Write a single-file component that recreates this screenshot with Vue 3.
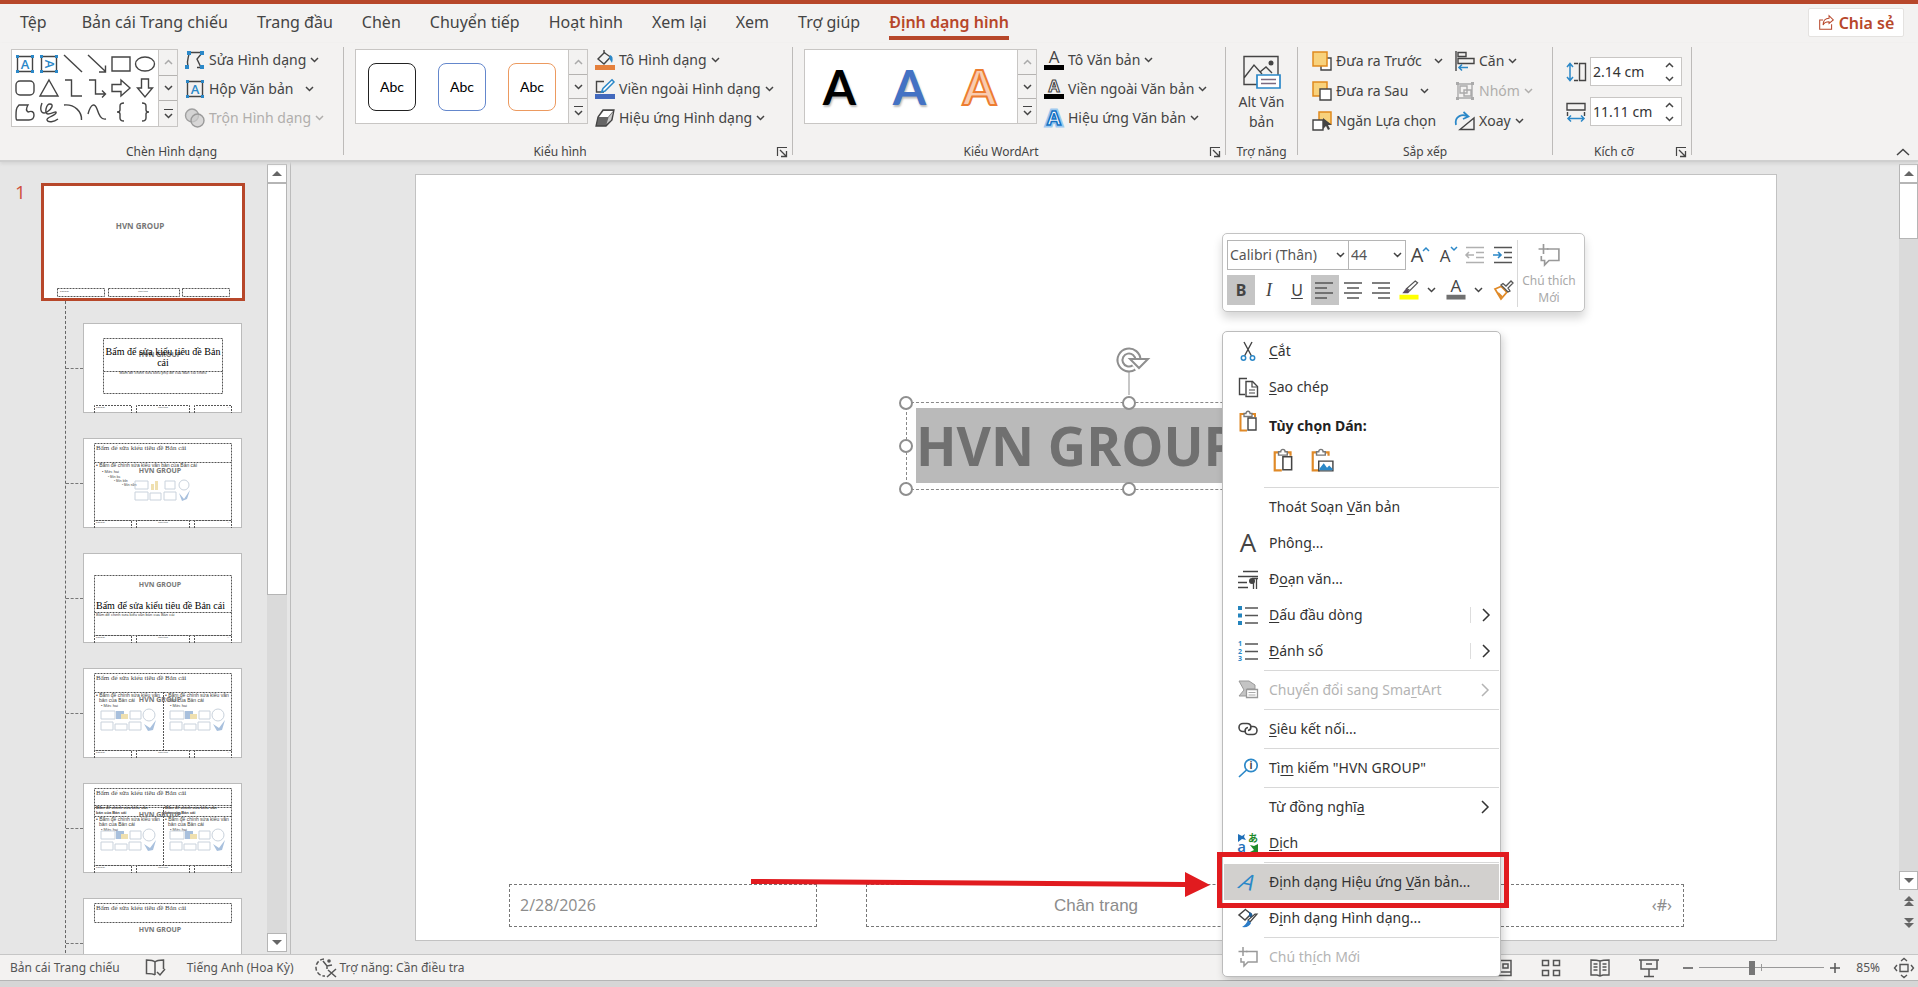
<script setup>
import { h, ref } from 'vue'

const ink = '#444'
const blue = '#2b88c8'
const line = (d, c = ink, w = 1.4) => `<path d="${d}" fill="none" stroke="${c}" stroke-width="${w}"/>`
const fill = (d, c) => `<path d="${d}" fill="${c}"/>`
const glyph = (t, x, y, s, c, extra = '') =>
  `<text x="${x}" y="${y}" font-size="${s}" fill="${c}" font-family="Open Sans, sans-serif" text-anchor="middle" ${extra}>${t}</text>`
const corners = (c = blue) =>
  [[1, 1], [16, 1], [1, 16], [16, 16]].map(([x, y]) => `<rect x="${x}" y="${y}" width="3" height="3" fill="${c}"/>`).join('')
const clip = (x = 0, y = 0) =>
  `<g transform="translate(${x} ${y})">` +
  line('M6 4H2.5V20.5H9M13 4h4V7', '#e08a28', 2) +
  '<path d="M6 6.500V3.500h2c0-3 4-3 4 0h2v3z" fill="#fff" stroke="#777" stroke-width="1.300"/>'

const icons = {
  textbox: line('M2.500 2.500h15v15h-15z') + corners() + glyph('A', 10, 14.500, 13, blue, 'font-weight="600"'),
  textboxV: line('M2.500 2.500h15v15h-15z') + corners() + glyph('A', 10, 14.500, 13, blue, 'font-weight="600" transform="rotate(90 10 10)"'),
  line: line('M1 1L19 18'),
  arrow: line('M1 1L18 17M18.500 11.500V18H12'),
  rect: line('M1 3h18v14h-18z'),
  oval: '<ellipse cx="10" cy="10" rx="9.500" ry="7" fill="none" stroke="#444" stroke-width="1.400"/>',
  round: '<rect x="1" y="3" width="18" height="14" rx="4" fill="none" stroke="#444" stroke-width="1.400"/>',
  tri: line('M10 2L19 18H1z'),
  elbow: line('M2 2H8.500V18H19'),
  elbowArrow: line('M2 2H8.500V16H18M15 12.500L18.500 16L15 19.500'),
  right: line('M1 6.500H10V2L19 10L10 18V13.500H1z'),
  down: line('M6.500 1V10H2.500L10 19L17.500 10H13.500V1z'),
  free: line('M4 3H13Q10 8 13 10Q19 8 19 13Q19 18 14 18H2Q1 18 1 14C1 9 1 6 4 3z'),
  scribble: line('M3 1C0 9 3 13 8 10S15 2 11 2S5 12 9 12S18 8 17 11S7 15 8 18S15 20 19 17'),
  arc: line('M1 3C12 2 19 10 18.500 18'),
  wave: line('M1 12C4 1 8 1 10 7S14 18 19 17'),
  lbrace: line('M13 1Q9 1 9 4V8Q9 10 6 10Q9 10 9 12V16Q9 19 13 19'),
  rbrace: line('M7 1Q11 1 11 4V8Q11 10 14 10Q11 10 11 12V16Q11 19 7 19'),
  editShape: line('M4 2.500H16M4 3C4 8 1 9 3 17.500M17 3L12 9L16 17.500H12', ink, 1.400) + '<g fill="#2b88c8"><path d="M2 1h4v4H2zM15 1h4v4h-4zM0 15h4v4H0zM15 15h4v4h-4z"/></g>',
  merge: '<circle cx="7" cy="7.500" r="6.500" fill="#d4d4d4" stroke="#a0a0a0" stroke-width="1.400"/><circle cx="12.500" cy="12.500" r="6.500" fill="#cccccc" fill-opacity=".7" stroke="#999" stroke-width="1.400"/>',
  fill: line('M10 2L3 9L9 14L15.500 7L9 2.500V0') + fill('M15 5q4 1 2 8q-2-3-3-5z', blue) + fill('M0 15h20v5H0z', '#e5803c'),
  outline: line('M9 2.500H1.500V13H9') + `<path d="M17 0.800L19 3L10 12L6.500 13L8 9.500z" fill="#fff" stroke="${blue}" stroke-width="1.500"/>` + fill('M0 15h20v5H0z', '#4269bd'),
  effect: '<path d="M8 2h11l-2 10l-6 6H1L3 9z" fill="#666" stroke="#444" stroke-width="1.300"/>' + fill('M8.500 3h9.500l-5 6H4z', '#fff') + fill('M13.500 9.500L18 4L16 12L11.500 16z', '#ccc'),
  textFill: glyph('A', 10, 13, 17, ink) + fill('M0 15h20v5H0z', '#000'),
  textOutline: glyph('A', 10, 13, 16, '#fff', 'class="hollow" stroke="#444" stroke-width="1.100" font-weight="700"') + fill('M0 15h20v5H0z', '#000'),
  textEffect: glyph('A', 10, 17, 20, '#fff', 'stroke="#9cc9ef" stroke-width="5" font-weight="700"') + glyph('A', 10, 17, 20, '#fff', 'stroke="#1673c4" stroke-width="1.600" font-weight="700"'),
  front: '<path d="M9 7h10v12H9z" fill="#fff" stroke="#444" stroke-width="1.400"/><path d="M1 1h14v14H1z" fill="#f8d27c" stroke="#e08a1e" stroke-width="1.500"/>',
  back: '<path d="M1 1h14v14H1z" fill="#f8d27c" stroke="#e08a1e" stroke-width="1.500"/><path d="M8 8h11v11H8z" fill="#fff" stroke="#444" stroke-width="1.400"/>',
  select: '<path d="M7 1h12v12H7z" fill="#f8d27c" stroke="#e08a1e" stroke-width="1.500"/><path d="M1 9h10v10H1z" fill="#fff" stroke="#444" stroke-width="1.400"/><path d="M11 7v11l3-3l2 4l2-1l-2-4h4z" fill="#444"/>',
  align: line('M1 0V20') + line('M3 1.500h8v4H3zM3 7.500h16v5H3z') + line('M13 16.500H4M7 13.500L4 16.500L7 19.500', blue, 1.600),
  group: line('M3 3h14v14H3zM5 5h7v7H5zM9 9h7v6H9z', '#aaa') + corners('#aaa'),
  rotate: line('M5 18.500H19V7z') + line('M1 14C-1 5 8 2 13 6M8.500 1L13.500 5.500L8 8', blue, 1.700),
  alt: line('M15 29.500H2V1.500H36V20M2 23L12 10L20 19M18 17L24 12L30 18') + '<circle cx="29" cy="8" r="2.500" fill="#444"/><path d="M15 20h23v13H15z" fill="#fff" stroke="#2b88c8" stroke-width="1.700"/>' + line('M19 24.500H34M19 28.500H34', '#7b6a80'),
  height: line('M4 2V18M1 5L4 1.500L7 5M1 15L4 18.500L7 15', blue, 1.500) + line('M8 1.500h4M8 18.500h4M13.500 1.500h6v17h-6z'),
  width: line('M1 1.500H19V8H1zM1.500 10V14M18.500 10V14') + line('M2 16.500H18M5 13.500L2 16.500L5 19.500M15 13.500L18 16.500L15 19.500', blue, 1.500),
  share: line('M6 7H2V18H16V12', '#b7472a', 1.200) + line('M6 13C6 7 9 5 13 5V2L18 7L13 11V9C9 9 7 10 6 13z', '#b7472a', 1.200),
  launch: line('M1.500 10V1.500H11', ink, 1.200) + line('M4 4L10 10M10.500 5V10.500H5', ink, 1.300),
  cut: line('M6 1L13.500 15M14 1L6.500 15') + `<g fill="none" stroke="${blue}" stroke-width="1.500"><circle cx="5.500" cy="17" r="2.200"/><circle cx="14.500" cy="17" r="2.200"/></g>`,
  copy: line('M7 17.500H1.500V1.500H9') + '<path d="M8 4.500h6.500l5 5v10H8z" fill="#fff" stroke="#444" stroke-width="1.400"/>' + line('M14 4.500V10H19.500M11 13h6M11 16h6', ink, 1.200),
  paste: clip() + '<path d="M10 8h8v12h-8z" fill="#fff" stroke="#444" stroke-width="1.400"/></g>',
  pasteImg: clip() + '<path d="M8 12h13v9H8z" fill="#fff" stroke="#444" stroke-width="1.300"/><path d="M8.600 19l4-5l3 4l2-2l3 3v1.400h-12z" fill="#2b88c8"/></g>',
  font: glyph('A', 10, 19, 26, ink),
  para: line('M5 2.500H20M0 7.500H20M0 13.500H9M0 18.500H10', ink, 1.300) + line('M15.500 9V20M18.500 9V20M14 9.500H20', ink, 1.300) + '<circle cx="14" cy="12" r="3" fill="#444"/>',
  bullets: line('M7 3H20M7 10.500H20M7 18H20', '#555', 1.500) + '<path d="M0 1h4v4H0zM0 8.500h4v4H0zM0 16h4v4H0z" fill="#2484bd"/>',
  numbers: line('M7 3H20M7 10.500H20M7 18H20', '#555', 1.500) + [1, 2, 3].map((n, i) => glyph(n, 2, 5 + i * 7.500, 7, blue, 'font-weight="700"')).join(''),
  smart: '<path d="M1 1h10l6 4v4H9v7H1l5-6z" fill="#c4c4c4" stroke="#999"/><path d="M8.500 9.500h11v8h-11z" fill="#fff" stroke="#999" stroke-width="1.300"/>' + line('M10.500 12.500h7M10.500 15h7', '#aaa', 1),
  link: line('M8 12.500H5A4 4 0 0 1 5 4.500H9C14 4.500 14 11 10 11.500', ink, 1.600) + line('M12 7.500H15A4 4 0 0 1 15 15.500H11C6 15.500 6 9 10 8.500', ink, 1.600),
  search: `<circle cx="13" cy="7.500" r="6.200" fill="#fff" stroke="${blue}" stroke-width="1.700"/>` + line('M8.500 12L1 19', blue, 1.700) + glyph('i', 13, 11, 10, ink, 'font-weight="700"'),
  translate: glyph('a', 3.500, 19, 15, '#1f6fb8', 'font-weight="600"') + '<text x="15" y="9" font-size="10" font-weight="700" font-family="Noto Sans CJK JP, sans-serif" text-anchor="middle" fill="#1d8a2a">あ</text>' + fill('M0 1l4 2l3-2l-1 3l2 3l-4-1l-4 3z', '#1f6fb8') + fill('M12 12l4 1l4-2v8h-8l4-2z', '#1d8a2a'),
  wordArt: glyph('A', 10, 18, 22, blue, 'transform="rotate(12 10 10) skewX(-20) translate(4 0)"'),
  shapeFmt: line('M8 1L1 7L7 12L13 6L8 2', ink, 1.500) + fill('M11 4q5 1 3 7l-3-3z', '#1f5f9a') + '<path d="M19 6L12 14L10 12L17 6z" fill="#fff" stroke="#444" stroke-width="1.200"/>' + fill('M10 12l3 3q-2 5-9 4q4-2 6-7z', '#2b7cc8'),
  comment: line('M8 4.500H19V15H10L6 19V15H3V11', '#999', 1.500) + line('M5 0V9M0.500 4.500H9.500', '#999', 1.500),
  grow: glyph('A', 8, 17, 20, ink) + line('M14 6L17 3L20 6', blue, 1.500),
  shrink: glyph('A', 8, 17, 17, ink) + line('M14 2L17 5L20 2', blue, 1.500),
  outdent: line('M1 2.500H19M11 7.500H19M11 12.500H19M1 17.500H19', '#b0b0b0', 1.500) + line('M9 10H1M4 7L1 10L4 13', '#b0b0b0', 1.500),
  indent: line('M1 2.500H19M11 7.500H19M11 12.500H19M1 17.500H19', '#555', 1.600) + line('M0 10H8M5 7L8 10L5 13', blue, 1.600),
  left: line('M0 3H18M0 8H12M0 13H18M0 18H12', '#555', 1.500),
  center: line('M1 3H19M4 8H16M1 13H19M4 18H16', '#555', 1.500),
  rightA: line('M1 3H19M7 8H19M1 13H19M7 18H19', '#555', 1.500),
  marker: '<path d="M16.500 1L19 3L11 11L7.500 9z" fill="#fff" stroke="#555" stroke-width="1.300"/>' + fill('M7 9l4 3l-2 2H3z', '#5c4a60') + fill('M0 15.500h20v5H0z', '#ff0'),
  fontColor: glyph('A', 10, 13, 18, ink) + fill('M0 15.500h20v5H0z', '#707070'),
  brush: '<path d="M2 9L9 6L14 12L8 19z" fill="#fff" stroke="#e08a28" stroke-width="1.800"/>' + line('M5 13L9 17M8 6L14 12', '#e08a28', 2) + '<path d="M8 5L10 3.500L13 6L18 1L20 3L15 8L17 11L15 12z" fill="#fff" stroke="#555" stroke-width="1.300"/>',
  book: line('M10 4V17M10 4C8 2 4 2 1.500 2V15.500C4 15.500 8 15.500 10 17M10 4C12 2 16 2 18.500 2V11M12 14L15 17L20 11', '#555', 1.500),
  access: line('M8 1A8.500 8.500 0 0 0 9 18', '#555', 1.500).replace('/>', ' stroke-dasharray="4 2"/>') + line('M7 3L11 8L16 7M11 8V11M12 12L20 19M20 11L11 19', '#555', 1.500) + '<circle cx="13" cy="3" r="1.800" fill="#555"/>',
  normal: line('M1 2.500H19V17.500H1zM1 14H19M7 2V14M11 6H16V10H11z', '#555', 1.500),
  sorter: line('M1.500 2.500h6v5h-6zM12.500 2.500h6v5h-6zM1.500 12.500h6v5h-6zM12.500 12.500h6v5h-6z', '#555', 1.500),
  reading: line('M10 3V18M10 3C7 2 4 2 1 2V17H7L10 18L13 17H19V2C16 2 13 2 10 3M3.500 6h4M3.500 9h4M3.500 12h4M12.500 6h4M12.500 9h4M12.500 12h4', '#555', 1.400),
  show: line('M0 2H20M2 2V11H18V2M10 11V18M5 18.500H15M7 6H13', '#555', 1.500),
  fit: line('M6 6.500H14V13.500H6zM7 3L10 0.500L13 3M7 17L10 19.500L13 17M3 7L0.500 10L3 13M17 7L19.500 10L17 13', '#555', 1.400)
}

const Icon = (p) =>
  h('svg', { width: p.w || 20, height: p.h || p.w || 20, viewBox: p.box || '0 0 20 20', 'aria-hidden': 'true', overflow: 'visible', innerHTML: icons[p.name] })
Icon.props = ['name', 'w', 'h', 'box']

const Chevron = (p) =>
  h('svg', { width: p.big ? 10 : 9, height: p.big ? 16 : 6, viewBox: p.big ? '0 0 10 16' : '0 0 9 6', 'aria-hidden': 'true' },
    [h('path', { d: p.big ? 'M2 2L8 8L2 14' : p.up ? 'M1 5L4.500 1.500L8 5' : 'M1 1L4.500 4.500L8 1', fill: 'none', stroke: 'currentColor', 'stroke-width': 1.5 })])
Chevron.props = { big: Boolean, up: Boolean }

const tabs = ['Tệp', 'Bản cái Trang chiếu', 'Trang đầu', 'Chèn', 'Chuyển tiếp', 'Hoạt hình', 'Xem lại', 'Xem', 'Trợ giúp', 'Định dạng hình']
const shapes = ['textbox', 'textboxV', 'line', 'arrow', 'rect', 'oval', 'round', 'tri', 'elbow', 'elbowArrow', 'right', 'down', 'free', 'scribble', 'arc', 'wave', 'lbrace', 'rbrace']
const insertCmds = [
  { icon: 'editShape', label: 'Sửa Hình dạng' },
  { icon: 'textbox', label: 'Hộp Văn bản', wide: true },
  { icon: 'merge', label: 'Trộn Hình dạng', off: true }
]
const shapeCmds = [
  { icon: 'fill', label: 'Tô Hình dạng' },
  { icon: 'outline', label: 'Viền ngoài Hình dạng' },
  { icon: 'effect', label: 'Hiệu ứng Hình dạng' }
]
const artCmds = [
  { icon: 'textFill', label: 'Tô Văn bản' },
  { icon: 'textOutline', label: 'Viền ngoài Văn bản' },
  { icon: 'textEffect', label: 'Hiệu ứng Văn bản' }
]
const orderCmds = [
  { icon: 'front', label: 'Đưa ra Trước', wide: true },
  { icon: 'back', label: 'Đưa ra Sau', wide: true },
  { icon: 'select', label: 'Ngăn Lựa chọn', plain: true }
]
const alignCmds = [
  { icon: 'align', label: 'Căn' },
  { icon: 'group', label: 'Nhóm', off: true },
  { icon: 'rotate', label: 'Xoay' }
]

const menu = [
  { icon: 'cut', t: ['', 'C', 'ắt'] },
  { icon: 'copy', t: ['', 'S', 'ao chép'] },
  { paste: true },
  { sep: true },
  { t: ['Thoát Soạn ', 'V', 'ăn bản'] },
  { icon: 'font', t: ['Phôn', 'g', '...'] },
  { icon: 'para', t: ['Đ', 'o', 'ạn văn...'] },
  { icon: 'bullets', t: ['', 'D', 'ấu đầu dòng'], more: true, split: true },
  { icon: 'numbers', t: ['', 'Đ', 'ánh số'], more: true, split: true },
  { sep: true },
  { icon: 'smart', t: ['Chuyển đổi sang Sma', 'r', 'tArt'], more: true, off: true },
  { sep: true },
  { icon: 'link', t: ['', 'S', 'iêu kết nối...'] },
  { sep: true },
  { icon: 'search', t: ['Tì', 'm', ' kiếm "HVN GROUP"'] },
  { sep: true },
  { t: ['Từ đồng nghĩ', 'a', ''], more: true },
  { icon: 'translate', t: ['', 'D', 'ịch'] },
  { sep: true },
  { icon: 'wordArt', t: ['Định dạng Hiệu ứng ', 'V', 'ăn bản...'], active: true },
  { icon: 'shapeFmt', t: ['Đ', 'ị', 'nh dạng Hình dạng...'] },
  { sep: true },
  { icon: 'comment', t: ['Chú th', 'í', 'ch Mới'], off: true }
]

const layouts = ['title', 'content', 'section', 'two', 'compare', 'only']
const heading = 'Bấm để sửa kiểu tiêu đề Bản cái'
const height = ref('2.14 cm')
const width = ref('11.11 cm')
const zoom = ref(42)
</script>

<template>
  <div class="app">
    <header class="top">
      <nav class="tabs">
        <button v-for="(t, i) in tabs" :key="t" class="tab" :class="{ on: i === 9, file: i === 0 }">{{ t }}</button>
      </nav>
      <button class="share"><Icon name="share" :w="17" />Chia sẻ</button>
    </header>

    <section class="ribbon">
      <div class="group g-insert">
        <div class="body">
          <div class="gallery">
            <div class="shapes">
              <button v-for="s in shapes" :key="s" :aria-label="s"><Icon :name="s" /></button>
            </div>
            <div class="scroller">
              <button aria-label="Lên" class="dim"><Chevron up /></button>
              <button aria-label="Xuống"><Chevron /></button>
              <button aria-label="Thêm" class="more"><Chevron /></button>
            </div>
          </div>
          <div class="cmds">
            <button v-for="c in insertCmds" :key="c.label" class="cmd" :class="{ wide: c.wide, off: c.off }"><Icon :name="c.icon" /><span>{{ c.label }}</span><Chevron /></button>
          </div>
        </div>
        <div class="foot"><span>Chèn Hình dạng</span></div>
      </div>
      <i class="rule"></i>
      <div class="group g-shape">
        <div class="body">
          <div class="gallery short">
            <div class="cards">
              <button class="abc black">Abc</button>
              <button class="abc navy">Abc</button>
              <button class="abc orange">Abc</button>
            </div>
            <div class="scroller">
              <button aria-label="Lên" class="dim"><Chevron up /></button>
              <button aria-label="Xuống"><Chevron /></button>
              <button aria-label="Thêm" class="more"><Chevron /></button>
            </div>
          </div>
          <div class="cmds">
            <button v-for="c in shapeCmds" :key="c.label" class="cmd"><Icon :name="c.icon" /><span>{{ c.label }}</span><Chevron /></button>
          </div>
        </div>
        <div class="foot"><span>Kiểu hình</span><button aria-label="Kiểu hình"><Icon name="launch" :w="12" box="0 0 12 12" /></button></div>
      </div>
      <i class="rule"></i>
      <div class="group g-art">
        <div class="body">
          <div class="gallery short">
            <div class="cards">
              <button class="art a1">A</button>
              <button class="art a2">A</button>
              <button class="art a3">A</button>
            </div>
            <div class="scroller">
              <button aria-label="Lên" class="dim"><Chevron up /></button>
              <button aria-label="Xuống"><Chevron /></button>
              <button aria-label="Thêm" class="more"><Chevron /></button>
            </div>
          </div>
          <div class="cmds">
            <button v-for="c in artCmds" :key="c.label" class="cmd"><Icon :name="c.icon" /><span>{{ c.label }}</span><Chevron /></button>
          </div>
        </div>
        <div class="foot"><span>Kiểu WordArt</span><button aria-label="Kiểu WordArt"><Icon name="launch" :w="12" box="0 0 12 12" /></button></div>
      </div>
      <i class="rule"></i>
      <div class="group g-alt">
        <button class="alt"><Icon name="alt" :w="39" :h="34" box="0 0 39 34" /><span>Alt Văn<br>bản</span></button>
        <div class="foot"><span>Trợ năng</span></div>
      </div>
      <i class="rule"></i>
      <div class="group g-order">
        <div class="body">
          <div class="cmds tall first">
            <button v-for="c in orderCmds" :key="c.label" class="cmd" :class="{ wide: c.wide }"><Icon :name="c.icon" /><span>{{ c.label }}</span><Chevron v-if="!c.plain" /></button>
          </div>
          <div class="cmds tall">
            <button v-for="c in alignCmds" :key="c.label" class="cmd" :class="{ off: c.off }"><Icon :name="c.icon" /><span>{{ c.label }}</span><Chevron /></button>
          </div>
        </div>
        <div class="foot"><span>Sắp xếp</span></div>
      </div>
      <i class="rule"></i>
      <div class="group g-size">
        <div class="sizes">
          <label class="size"><Icon name="height" /><span class="field"><input v-model="height" aria-label="Chiều cao"><span class="spin"><button aria-label="Tăng chiều cao"><Chevron up /></button><button aria-label="Giảm chiều cao"><Chevron /></button></span></span></label>
          <label class="size"><Icon name="width" /><span class="field"><input v-model="width" aria-label="Chiều rộng"><span class="spin"><button aria-label="Tăng chiều rộng"><Chevron up /></button><button aria-label="Giảm chiều rộng"><Chevron /></button></span></span></label>
        </div>
        <div class="foot"><span>Kích cỡ</span><button aria-label="Kích cỡ"><Icon name="launch" :w="12" box="0 0 12 12" /></button></div>
      </div>
      <i class="rule"></i>
      <button class="collapse" aria-label="Thu gọn"><svg width="14" height="8" viewBox="0 0 14 8"><path d="M1 7L7 1.500L13 7" fill="none" stroke="#444" stroke-width="1.500" /></svg></button>
    </section>

    <main class="work">
      <aside class="panel">
        <div class="list">
          <div class="master">
            <span class="num">1</span>
            <svg class="big" width="204" height="118" viewBox="0 0 204 118">
              <rect x="1.500" y="1.500" width="201" height="115" fill="#fff" stroke="#b7472a" stroke-width="3" />
              <text x="99" y="46" class="brand" font-size="8">HVN GROUP</text>
              <g class="ph"><path d="M16.500 105.500h47v8h-47zM67.500 105.500h71v8h-71zM141.500 105.500h47v8h-47z" /></g>
              <text x="19" y="109" font-size="2">2/28/2026</text><text x="97" y="109" font-size="2">Chân trang</text>
            </svg>
          </div>
          <ul class="tree">
            <li v-for="k in layouts" :key="k">
              <i></i>
              <svg class="thumb" width="159" height="90" viewBox="0 0 159 90">
                <rect x="0.500" y="0.500" width="158" height="89" fill="#fff" stroke="#bbb" />
                <template v-if="k !== 'only'">
                  <path class="dash" d="M11.500 90V82.500h37V90M53.500 90V82.500h53V90M111.500 90V82.500h37V90" />
                  <text x="13" y="85" font-size="2">2/28/2026</text><text x="75" y="85" font-size="2">Chân trang</text><text x="144" y="85" font-size="2">‹#›</text>
                </template>
                <template v-if="k === 'title'">
                  <path class="dash" d="M20.500 15.500h119v55h-119zM20.500 48.500h119" />
                  <text x="77" y="34" class="brand" font-size="7">HVN GROUP</text>
                  <text x="80" y="32" class="serif mid" font-size="10">Bấm để sửa kiểu tiêu đề Bản</text>
                  <text x="80" y="43" class="serif mid" font-size="10">cái</text>
                  <text x="80" y="51" class="mid" font-size="4">Bấm để chỉnh sửa kiểu phụ đề của Bản cái chiếu</text>
                </template>
                <template v-else-if="k === 'section'">
                  <path class="dash" d="M11.500 22.500h137v60h-137zM11.500 59.500h137" />
                  <text x="77" y="34" class="brand" font-size="7">HVN GROUP</text>
                  <text x="13" y="56" class="serif" font-size="10">{{ heading }}</text>
                  <text x="13" y="63" font-size="4" fill="#888">Bấm để chỉnh sửa kiểu văn bản của Bản cái</text>
                </template>
                <template v-else>
                  <path class="dash" d="M11.500 5.500h137v19h-137z" />
                  <text x="13" y="12" class="serif soft" font-size="7">{{ heading }}</text>
                </template>
                <template v-if="k === 'content'">
                  <path class="dash" d="M11.500 24.500V82.500H148.500V24.500" />
                  <text x="13" y="29" font-size="5">• Bấm để chỉnh sửa kiểu văn bản của Bản cái</text>
                  <text x="19" y="35" font-size="4">• Mức hai</text><text x="25" y="40" font-size="3">• Mức ba</text><text x="31" y="44" font-size="3">• Mức bốn</text><text x="39" y="48" font-size="3">• Mức năm</text>
                  <text x="77" y="35" class="brand" font-size="7">HVN GROUP</text>
                  <g class="media" transform="translate(52 43)"><path d="M0 0h13v8H0zM30 0h10v8H30zM0 11h13v8H0zM29 11h12v8H29zM15 12h11v7H15z" /><path d="M16 3h3v6h-3zM20 0h3v9h-3z" class="gold" /><circle cx="49" cy="4" r="5" /><path d="M44 12l5 6l6-9l-3 9l-5 2z" class="sky" /></g>
                </template>
                <template v-if="k === 'two' || k === 'compare'">
                  <path class="dash" d="M11.500 24.500V82.500H148.500V24.500M80.500 24V82" />
                  <path v-if="k === 'compare'" class="dash" d="M11.500 22.500h137M11.500 33.500h137" />
                  <template v-for="x in [13, 82]" :key="x">
                    <g v-if="k === 'compare'" font-size="4"><text :x="x" y="26" font-weight="700">Bấm để chỉnh sửa kiểu văn</text><text :x="x" y="31" font-weight="700">bản của Bản cái</text></g>
                    <g font-size="5" :transform="`translate(${x} ${k === 'two' ? 0 : 9})`">
                      <text x="0" y="29">• Bấm để chỉnh sửa kiểu văn</text><text x="3" y="34">bản của Bản cái</text><text x="5" y="39" font-size="4">• Mức hai</text>
                    </g>
                    <g class="media" :transform="`translate(${x + 5} ${k === 'two' ? 43 : 48})`"><path d="M0 0h14v8H0zM29 0h11v8H29zM0 11h12v8H0zM28 11h12v8H28zM14 13h12v6H14z" /><path d="M15 0h8v8h-8z" class="sky" /><path d="M20 3h7v5h-7z" class="gold" /><circle cx="48" cy="4" r="6" /><path d="M43 13l6 4l6-8l-3 10l-5 1z" class="sky" /></g>
                  </template>
                  <text x="77" y="34" class="brand" font-size="7">HVN GROUP</text>
                </template>
                <text v-if="k === 'only'" x="77" y="34" class="brand" font-size="7">HVN GROUP</text>
              </svg>
            </li>
          </ul>
        </div>
        <div class="bar"><button aria-label="Cuộn lên"><b class="up"></b></button><span class="grip long"></span><span class="track"></span><button aria-label="Cuộn xuống"><b class="dn"></b></button></div>
      </aside>

      <section class="canvas">
        <div class="slide">
          <div class="ph-box date">2/28/2026</div>
          <div class="ph-box footer">Chân trang</div>
          <div class="ph-box page">‹#›</div>

          <div class="title"><span>HVN GROUP</span></div>
          <svg class="handles" width="460" height="162" viewBox="0 0 460 162">
            <g fill="#fff" stroke="#8f8f8f" stroke-width="2">
              <path d="M233 37V60" stroke-width="1" />
              <circle cx="10" cy="68" r="6" /><circle cx="10" cy="111" r="6" /><circle cx="10" cy="154" r="6" />
              <circle cx="233" cy="68" r="6" /><circle cx="233" cy="154" r="6" />
            </g>
            <g fill="none" stroke="#8f8f8f">
              <path d="M242 25A9 9 0 1 0 238 32.500" stroke-width="7" />
              <path d="M242 25A9 9 0 1 0 238 32.500" stroke="#fff" stroke-width="3" />
              <path d="M234 24H252L243 33z" fill="#fff" stroke-width="2" />
            </g>
          </svg>

          <div class="mini">
            <div class="mini-main">
              <div class="row">
                <span class="pick fam"><select aria-label="Phông"><option>Calibri (Thân)</option></select><Chevron /></span>
                <span class="pick num2"><select aria-label="Cỡ chữ"><option>44</option></select><Chevron /></span>
                <button v-for="n in ['grow', 'shrink', 'outdent', 'indent']" :key="n" :aria-label="n"><Icon :name="n" /></button>
              </div>
              <div class="row">
                <button class="on"><b>B</b></button>
                <button><em>I</em></button>
                <button><u>U</u></button>
                <button class="on" aria-label="Căn trái"><Icon name="left" /></button>
                <button aria-label="Căn giữa"><Icon name="center" /></button>
                <button aria-label="Căn phải"><Icon name="rightA" /></button>
                <button class="split" aria-label="Tô sáng"><Icon name="marker" box="0 0 20 21" /><Chevron /></button>
                <button class="split" aria-label="Màu phông"><Icon name="fontColor" box="0 0 20 21" /><Chevron /></button>
                <button aria-label="Chổi định dạng"><Icon name="brush" /></button>
              </div>
            </div>
            <button class="note" disabled><Icon name="comment" :w="22" /><span>Chú thích<br>Mới</span></button>
          </div>

          <div class="menu">
            <template v-for="(m, i) in menu" :key="i">
              <hr v-if="m.sep">
              <div v-else-if="m.paste" class="paste">
                <Icon name="paste" :w="22" box="0 0 22 22" />
                <strong>Tùy chọn Dán:</strong>
                <div class="opts"><button aria-label="Dán"><Icon name="paste" :w="24" box="0 0 22 22" /></button><button aria-label="Dán ảnh"><Icon name="pasteImg" :w="24" box="0 0 22 22" /></button></div>
              </div>
              <button v-else class="item" :class="{ active: m.active, off: m.off }">
                <span class="ic"><Icon v-if="m.icon" :name="m.icon" /></span>
                <span class="lbl">{{ m.t[0] }}<u>{{ m.t[1] }}</u>{{ m.t[2] }}</span>
                <span v-if="m.more" class="sub" :class="{ line: m.split }"><Chevron big /></span>
              </button>
            </template>
          </div>

          <div class="frame"></div>
          <svg class="pointer" width="460" height="26" viewBox="0 0 460 26"><path d="M0 7L434 10V0L459 13L434 25V15L0 12z" fill="#e11b1f" /></svg>
        </div>
      </section>

      <div class="bar right"><button aria-label="Cuộn lên"><b class="up"></b></button><span class="grip"></span><span class="track"></span><button aria-label="Cuộn xuống"><b class="dn"></b></button>
        <button class="page" aria-label="Trang trước"><b class="up"></b><b class="up"></b></button><button class="page" aria-label="Trang sau"><b class="dn"></b><b class="dn"></b></button>
      </div>
    </main>

    <footer class="status">
      <span>Bản cái Trang chiếu</span>
      <button aria-label="Soát lỗi"><Icon name="book" /></button>
      <button>Tiếng Anh (Hoa Kỳ)</button>
      <button class="acc"><Icon name="access" />Trợ năng: Cần điều tra</button>
      <div class="views">
        <button v-for="v in ['normal', 'sorter', 'reading', 'show']" :key="v" :aria-label="v"><Icon :name="v" /></button>
      </div>
      <button class="pm" aria-label="Thu nhỏ"><svg width="12" height="12" viewBox="0 0 12 12"><path d="M1 6h10" stroke="#555" stroke-width="1.500" /></svg></button>
      <input v-model="zoom" type="range" min="0" max="100" aria-label="Thu phóng">
      <button class="pm" aria-label="Phóng to"><svg width="12" height="12" viewBox="0 0 12 12"><path d="M1 6h10M6 1v10" stroke="#555" stroke-width="1.500" /></svg></button>
      <button class="pct">85%</button>
      <button aria-label="Vừa cửa sổ"><Icon name="fit" :w="20" /></button>
    </footer>
  </div>
</template>

<style>
html, body { margin: 0; }
</style>

<style scoped>
* { box-sizing: border-box; }
.app { height: 100vh; display: flex; flex-direction: column; background: #e6e6e6; border-bottom: 6px solid #d6d6d6; color: #444; font: 14px/20px "Noto Sans", "Open Sans", sans-serif; overflow: hidden; }
button { border: 0; padding: 0; margin: 0; background: none; color: inherit; font: inherit; }
svg { display: block; flex: none; }
.top { flex: none; height: 43px; border-top: 4px solid #b7472a; background: #f3f2f1; display: flex; justify-content: space-between; padding: 0 14px 0 20px; }
.tabs { display: flex; gap: 29px; font-size: 16px; }
.tab { height: 36px; padding-top: 4px; white-space: nowrap; border-bottom: 4px solid transparent; }
.tab.file { margin-right: 6px; }
.tab.on { color: #b7472a; font-weight: 600; border-color: #b7472a; }
.share { margin-top: 4px; height: 29px; width: 96px; background: #fff; border: 1px solid #e4e2e0; border-radius: 2px; color: #b7472a; font-weight: 600; font-size: 16px; display: flex; align-items: center; justify-content: center; gap: 4px; }

.ribbon { flex: none; height: 119px; background: #f3f2f1; display: flex; border-bottom: 2px solid #cfcfcf; box-shadow: 0 2px 3px #d6d6d6; position: relative; z-index: 1; }
.rule { flex: none; width: 1px; height: 108px; margin-top: 4px; background: #bdbbb9; }
.group { flex: none; display: flex; flex-direction: column; }
.g-insert { width: 343px; }
.g-shape { width: 448px; }
.g-art { width: 432px; }
.g-alt { width: 71px; }
.g-order { width: 254px; }
.g-size { width: 138px; }
.body { display: flex; flex: 1; padding-left: 11px; }
.foot { flex: none; height: 16px; display: flex; align-items: center; font-size: 12px; }
.foot span { flex: 1; text-align: center; white-space: nowrap; }
.foot button { width: 16px; }
.gallery { flex: none; margin-top: 6px; height: 78px; display: flex; background: #fff; border: 1px solid #c8c6c4; }
.gallery.short { height: 75px; width: 233px; }
.shapes { display: grid; grid-template-columns: repeat(6, 24px); grid-auto-rows: 24px; padding: 2px 1px; }
.shapes button { display: grid; place-items: center; }
.scroller { width: 19px; margin-left: auto; display: flex; flex-direction: column; border-left: 1px solid #c8c6c4; background: #f3f2f1; }
.scroller button { flex: 1; display: grid; place-items: center; border-bottom: 1px solid #b5b3b1; }
.scroller button:last-child { border-bottom: 0; }
.scroller .dim { color: #aaa; }
.scroller .more { align-content: center; gap: 3px; }
.scroller .more::before { content: ""; width: 9px; height: 1px; background: #444; }
.cards { display: flex; align-items: center; gap: 22px; padding-left: 12px; }
.abc { width: 48px; height: 48px; border-radius: 8px; border: 1px solid #222; background: #fff; color: #000; font: 14px/20px Lato, sans-serif; }
.abc.navy { border-color: #6487cc; }
.abc.orange { border-color: #ec9a60; }
.art { width: 48px; height: 56px; padding-right: 3px; font: 700 48px/56px Lato, sans-serif; color: #000; text-shadow: 1px 2px 2px #bbb; }
.art.a2 { color: #4472c4; }
.art.a3 { color: #f9ccb0; -webkit-text-stroke: 2px #ed7d31; text-shadow: none; }
.cmds { display: flex; flex-direction: column; padding: 2px 0 0 7px; }
.cmds.tall { padding: 3px 0 0; }
.first { width: 143px; margin-left: 3px; }
.cmd { height: 29px; display: flex; align-items: center; gap: 4px; white-space: nowrap; }
.tall .cmd { height: 30px; }
.cmd.wide span { margin-right: 8px; }
.off { color: #b0aeac; }
.alt { flex: 1; display: flex; flex-direction: column; align-items: center; padding-top: 12px; gap: 3px; }
.sizes { flex: 1; display: flex; flex-direction: column; gap: 11px; padding: 14px 0 0 13px; }
.size { display: flex; gap: 4px; align-items: center; }
.field { display: flex; width: 92px; height: 29px; border: 1px solid #c8c6c4; background: #fff; }
.field input { width: 68px; border: 0; padding: 0 0 0 2px; outline: 0; background: none; font: inherit; color: #333; }
.spin { display: flex; flex-direction: column; justify-content: center; gap: 8px; padding-left: 6px; }
.collapse { margin: auto 8px 4px auto; }

.work { flex: 1; min-height: 0; display: flex; }
.panel { flex: none; width: 291px; display: flex; border-right: 1px solid #bcbcbc; }
.list { flex: 1; overflow: hidden; padding-top: 21px; }
.master { display: flex; }
.num { width: 41px; padding-left: 15px; color: #d0503c; font: 19px/18px "Open Sans", sans-serif; }
.tree { list-style: none; margin: 0 0 0 65px; padding: 22px 0 0; border-left: 1px dashed #666; }
.tree li { display: flex; align-items: center; margin-bottom: 25px; }
.tree i { width: 17px; border-top: 1px dashed #777; }
svg text { font-family: "Liberation Sans", sans-serif; fill: #444; }
svg .brand { font-family: "Open Sans", sans-serif; font-weight: 700; text-anchor: middle; fill: #777; }
svg .serif { font-family: "Liberation Serif", serif; fill: #000; }
svg .soft { fill: #444; }
svg .mid { text-anchor: middle; }
.dash, .ph path { fill: none; stroke: #555; stroke-dasharray: 2 1; }
.media path, .media circle { fill: none; stroke: #c9d2dc; }
.media .gold { fill: #efe0b0; stroke: none; }
.media .sky { fill: #a8c0dd; stroke: none; }
.bar { flex: none; width: 20px; margin: 2px 3px 2px 0; display: flex; flex-direction: column; background: #dadada; }
.bar button { height: 19px; background: #fff; border: 1px solid #b5b5b5; display: grid; place-items: center; flex: none; }
.bar b { width: 0; height: 0; border: 5px solid transparent; }
.bar .up { border-top: 0; border-bottom-color: #666; }
.bar .dn { border-bottom: 0; border-top-color: #666; }
.grip { flex: none; height: 56px; background: #fff; border: 1px solid #b5b5b5; }
.grip.long { height: 412px; }
.track { flex: 1; }
.bar.right { width: 19px; margin: 2px 0 20px; }
.bar .page { height: 22px; border: 0; background: #e6e6e6; align-content: center; }

.canvas { flex: 1; min-width: 0; }
.slide { position: relative; z-index: 2; width: calc(100% - 248px); aspect-ratio: 16 / 9; margin: 13px 0 0 125px; background: #fff; border: 0; box-shadow: 0 0 0 1px #c2c2c2; }
.ph-box { position: absolute; top: 709px; height: 43px; line-height: 41px; border: 1px dashed #777; color: #8c8c8c; }
.date { left: 93px; width: 308px; padding-left: 10px; font: 16px/41px "Open Sans", sans-serif; }
.footer { left: 450px; width: 460px; text-align: center; font: 17px/41px "Liberation Sans", sans-serif; }
.page.ph-box { left: 960px; width: 308px; padding-right: 11px; text-align: right; font-size: 16px; }
.title { position: absolute; left: 490px; top: 227px; width: 447px; height: 88px; border: 1px dashed #888; padding: 5px 9px; }
.title span { display: block; height: 75px; background: #bababa; color: #707070; font: 700 53px/75px "Open Sans", sans-serif; white-space: nowrap; }
.handles { position: absolute; left: 480px; top: 160px; }
.mini { position: absolute; left: 806px; top: 58px; width: 363px; height: 79px; background: #fff; border: 1px solid #c3c3c3; border-radius: 5px; box-shadow: 0 6px 10px rgba(0, 0, 0, .16); display: flex; padding: 6px 4px 4px; }
.mini-main { width: 291px; border-right: 1px solid #d8d8d8; }
.row { display: flex; align-items: center; height: 30px; margin-bottom: 5px; }
.row > button { width: 28px; height: 30px; display: grid; place-items: center; flex: none; font-size: 16px; }
.row > .split { width: 47px; display: flex; align-items: center; padding-left: 4px; gap: 8px; }
.row .on { background: #c5c5c5; }
.row em { font-family: "Liberation Serif", serif; font-size: 18px; }
.pick { display: flex; align-items: center; height: 30px; border: 1px solid #b5b5b5; margin-right: -1px; padding-right: 3px; }
.pick select { flex: 1; min-width: 0; appearance: none; border: 0; background: none; color: #555; font: inherit; padding: 0 0 0 2px; outline: 0; }
.fam { width: 122px; }
.num2 { width: 58px; }
.note { flex: 1; color: #a9a9a9; font-size: 12px; line-height: 17px; display: flex; flex-direction: column; align-items: center; gap: 6px; padding: 4px 0 0; white-space: nowrap; }

.menu { position: absolute; left: 806px; top: 156px; width: 279px; background: #fff; border: 1px solid #bcbcbc; border-radius: 5px; box-shadow: 2px 4px 8px rgba(0, 0, 0, .18); padding: 1px; color: #333; }
.menu hr { margin: 1px 0 1px 40px; border: 0; height: 1px; background: #d8d8d8; }
.item { width: 100%; height: 36px; display: flex; align-items: center; text-align: left; }
.ic { width: 45px; padding-left: 14px; }
.lbl { flex: 1; white-space: nowrap; }
.item.off { color: #b4b4b4; }
.item.active { background: #d2d0ce; }
.sub { width: 29px; height: 16px; padding-left: 10px; }
.sub.line { border-left: 1px solid #ddd; }
u { text-underline-offset: 2px; }
.paste { display: grid; grid-template-columns: 31px 1fr; grid-template-rows: 24px 24px; row-gap: 14px; padding: 5px 0 0 14px; height: 81px; }
.paste strong { padding-top: 6px; font-weight: 700; color: #222; }
.opts { grid-column: 2; display: flex; gap: 14px; padding-left: 3px; }
.frame { position: absolute; left: 801px; top: 677px; width: 292px; height: 56px; border: 5px solid #e11b1f; }
.pointer { position: absolute; left: 335px; top: 697px; }

.status { flex: none; height: 27px; border-top: 1px solid #c6c6c6; border-bottom: 1px solid #b5b5b5; background: #f3f2f1; display: flex; align-items: center; font-size: 12px; padding: 0 4px 0 10px; color: #555; white-space: nowrap; }
.status button { display: flex; align-items: center; }
.status > button:nth-of-type(1) { margin: 0 22px 0 25px; }
.status > .acc { gap: 4px; margin-left: 22px; }
.views { margin-left: auto; margin-right: 4px; display: flex; }
.views button { width: 49px; justify-content: center; }
.pm { width: 22px; justify-content: center; }
.status input { appearance: none; width: 125px; height: 16px; margin: 0; background: linear-gradient(#999, #999) 50% 50% / 100% 1px no-repeat, linear-gradient(#999, #999) 50% 50% / 1px 7px no-repeat; }
.status input::-webkit-slider-thumb { appearance: none; width: 6px; height: 14px; background: #777; }
.status > .pct { margin: 0 14px 0 10px; }
</style>
